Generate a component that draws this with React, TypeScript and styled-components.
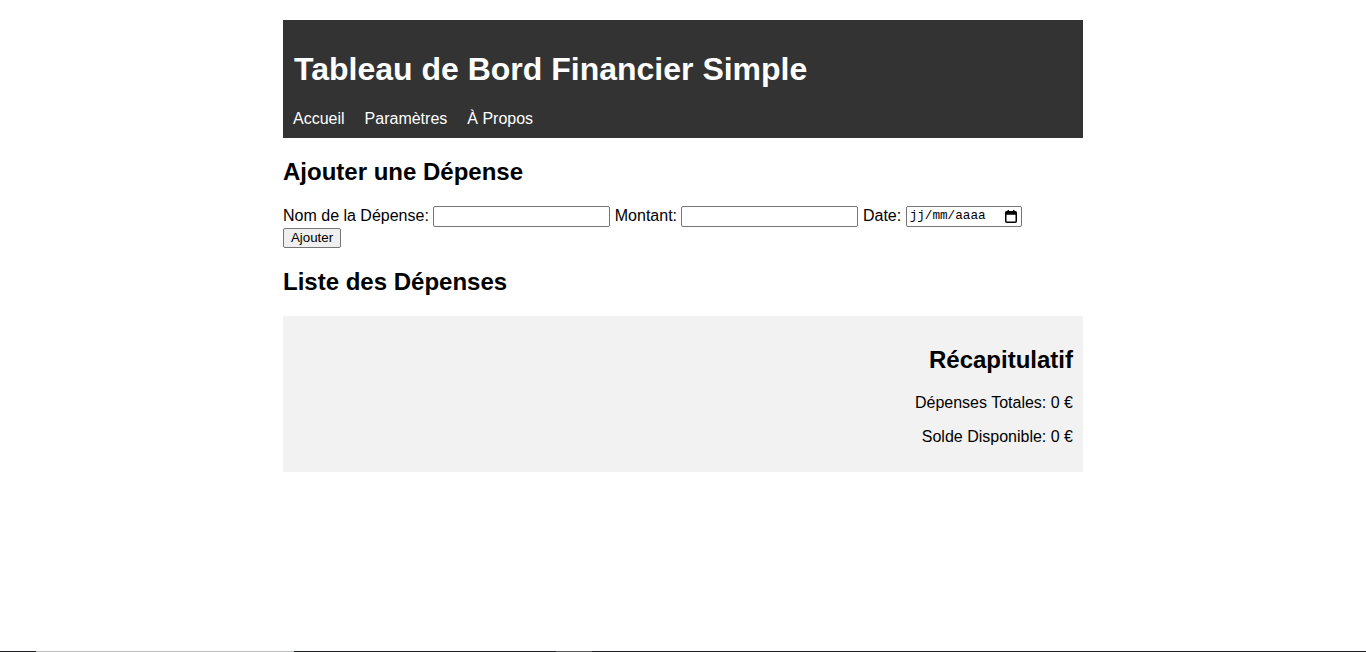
import React from "react";
import styled, { createGlobalStyle } from "styled-components";

const GlobalStyle = createGlobalStyle`
  html, body {
    margin: 0;
    padding: 0;
    background: #ffffff;
  }
  body {
    font-family: "Liberation Sans", Arial, sans-serif;
    font-size: 16px;
    color: #000000;
  }
`;

const Container = styled.div`
  width: 800px;
  margin: 20px auto 0;
`;

const Header = styled.header`
  background: #333333;
  color: #ffffff;
  padding: 10px;
`;

const Title = styled.h1`
  margin: 21.44px 0;
  font-size: 32px;
  line-height: 37px;
  font-weight: bold;
  padding-left: 1px;
`;

const Nav = styled.nav`
  display: flex;
  gap: 20px;
  line-height: 18.4px;
`;

const NavLink = styled.a`
  color: #ffffff;
  text-decoration: none;
  font-size: 16px;
`;

const SectionTitle = styled.h2`
  margin: 19.92px 0;
  font-size: 24px;
  line-height: 27.6px;
  font-weight: bold;
`;

const Form = styled.form`
  line-height: 18.4px;
  font-size: 16px;
`;

const Label = styled.label`
  vertical-align: middle;
`;

const TextInput = styled.input`
  box-sizing: border-box;
  width: 177px;
  height: 21px;
  border: 1px solid #767676;
  border-radius: 2px;
  padding: 1px 2px;
  font-family: "Liberation Sans", Arial, sans-serif;
  font-size: 13.33px;
  margin: 0;
  vertical-align: middle;
  background: #ffffff;
`;

const DateBox = styled.span`
  box-sizing: border-box;
  display: inline-flex;
  align-items: center;
  justify-content: space-between;
  width: 116px;
  height: 21px;
  border: 1px solid #767676;
  border-radius: 2px;
  padding: 0 4px 0 3px;
  margin: 0;
  vertical-align: middle;
  background: #ffffff;
`;

const DateText = styled.span`
  font-family: "Liberation Mono", "DejaVu Sans Mono", monospace;
  font-size: 12.67px;
  color: #000000;
`;

const Button = styled.button`
  box-sizing: border-box;
  display: block;
  height: 20px;
  width: 58px;
  margin-top: 1px;
  padding: 0 6px;
  border: 1px solid #767676;
  border-radius: 2px;
  background: #efefef;
  font-family: "Liberation Sans", Arial, sans-serif;
  font-size: 13.33px;
  color: #000000;
`;

const ExpenseList = styled.ul`
  margin: 21px 0;
  padding: 0;
  list-style: none;
`;

const Summary = styled.section`
  background: #f2f2f2;
  padding: 10px;
  text-align: right;
`;

const SummaryLine = styled.p`
  margin: 16px 0;
  line-height: 18.4px;
`;

const Taskbar = styled.div`
  position: fixed;
  left: 0;
  right: 0;
  bottom: 0;
  height: 1px;
  background: #202124;
`;

const TaskbarSegment = styled.div<{ $start: number; $width: number; $color: string }>`
  position: absolute;
  top: 0;
  left: ${(p) => p.$start}px;
  width: ${(p) => p.$width}px;
  height: 1px;
  background: ${(p) => p.$color};
`;

const CalendarIcon = () => (
  <svg width="12" height="13" viewBox="0 0 12 13" aria-hidden="true">
    <rect x="0.75" y="1.75" width="10.5" height="10.5" rx="1" fill="none" stroke="#000" strokeWidth="1.5" />
    <rect x="0.75" y="1.75" width="10.5" height="3" fill="#000" />
    <rect x="2.5" y="0" width="1.5" height="2.5" fill="#000" />
    <rect x="8" y="0" width="1.5" height="2.5" fill="#000" />
  </svg>
);

export default function App() {
  return (
    <>
      <GlobalStyle />
      <Container>
        <Header>
          <Title>Tableau de Bord Financier Simple</Title>
          <Nav>
            <NavLink href="#">Accueil</NavLink>
            <NavLink href="#">Paramètres</NavLink>
            <NavLink href="#">À Propos</NavLink>
          </Nav>
        </Header>

        <SectionTitle>Ajouter une Dépense</SectionTitle>
        <Form onSubmit={(e) => e.preventDefault()}>
          <Label htmlFor="nom">Nom de la Dépense:</Label> <TextInput id="nom" type="text" />{" "}
          <Label htmlFor="montant">Montant:</Label> <TextInput id="montant" type="text" />{" "}
          <Label>Date:</Label>{" "}
          <DateBox>
            <DateText>jj/mm/aaaa</DateText>
            <CalendarIcon />
          </DateBox>
          <Button type="submit">Ajouter</Button>
        </Form>

        <SectionTitle>Liste des Dépenses</SectionTitle>
        <ExpenseList />

        <Summary>
          <SectionTitle>Récapitulatif</SectionTitle>
          <SummaryLine>Dépenses Totales: 0 €</SummaryLine>
          <SummaryLine>Solde Disponible: 0 €</SummaryLine>
        </Summary>
      </Container>
      <Taskbar>
        <TaskbarSegment $start={36} $width={258} $color="#bdbdbd" />
        <TaskbarSegment $start={556} $width={36} $color="#5a5a5a" />
      </Taskbar>
    </>
  );
}
